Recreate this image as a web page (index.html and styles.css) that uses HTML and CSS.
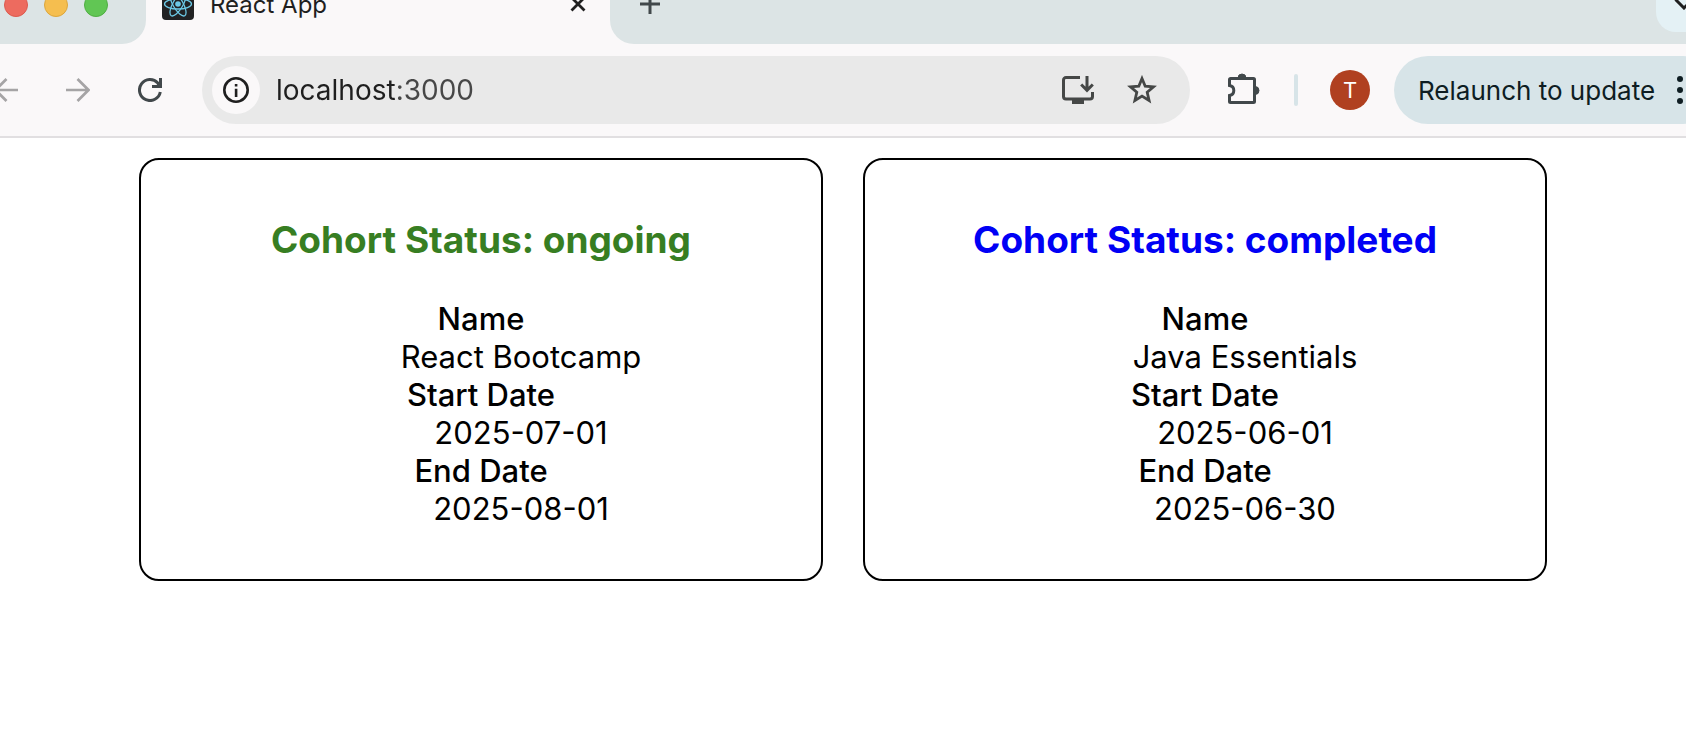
FILE: index.html
```
<!DOCTYPE html>
<html lang="en">
<head>
<meta charset="utf-8">
<title>React App</title>
<link rel="stylesheet" href="styles.css">
</head>
<body>
<header class="browser">
  <div class="tab-strip">
    <div class="window-controls">
      <button class="light light-close" aria-label="Close window"></button>
      <button class="light light-minimize" aria-label="Minimize window"></button>
      <button class="light light-zoom" aria-label="Zoom window"></button>
    </div>
    <div class="tab">
      <svg class="favicon" viewBox="0 0 32 32" aria-hidden="true">
        <rect width="32" height="32" rx="4" fill="#212224"/>
        <g fill="none" stroke="#6cc9e6" stroke-width="1.3">
          <ellipse cx="16" cy="16" rx="13.5" ry="5"/>
          <ellipse cx="16" cy="16" rx="13.5" ry="5" transform="rotate(60 16 16)"/>
          <ellipse cx="16" cy="16" rx="13.5" ry="5" transform="rotate(120 16 16)"/>
        </g>
        <circle cx="16" cy="16" r="2.8" fill="#6cc9e6"/>
      </svg>
      <span class="tab-title">React App</span>
      <button class="icon-button" aria-label="Close tab">
        <svg width="16" height="16" viewBox="0 0 16 16"><path d="M1.5 1.5l13 13M14.5 1.5l-13 13" fill="none" stroke="#1f1f1f" stroke-width="2.8"/></svg>
      </button>
    </div>
    <div class="strip-rest">
      <button class="icon-button" aria-label="New tab">
        <svg width="20" height="20" viewBox="0 0 20 20"><path d="M10 0v20M0 10h20" fill="none" stroke="#41484b" stroke-width="3"/></svg>
      </button>
      <button class="tab-search" aria-label="Search tabs">
        <svg width="20" height="12" viewBox="0 0 20 12"><path d="M1.5 1.5L10 10l8.500-8.500" fill="none" stroke="#1f1f1f" stroke-width="3"/></svg>
      </button>
    </div>
  </div>
  <div class="toolbar">
    <nav class="navigation" aria-label="History">
      <button class="icon-button" aria-label="Back">
        <svg width="24" height="24" viewBox="0 0 24 24"><path d="M24 12H2M12.500 1L1.500 12l11 11" fill="none" stroke="#a5a4a5" stroke-width="2.700"/></svg>
      </button>
      <button class="icon-button" aria-label="Forward">
        <svg width="24" height="24" viewBox="0 0 24 24"><path d="M0 12h22M11.500 1l11 11-11 11" fill="none" stroke="#a5a4a5" stroke-width="2.700"/></svg>
      </button>
      <button class="icon-button" aria-label="Reload">
        <svg width="24" height="24" viewBox="0 0 24 24"><path d="M22.300 14A10.500 10.500 0 1 1 19.800 5L22 7.500" fill="none" stroke="#41484b" stroke-width="3"/><path d="M21 0h3v10H14V7h4.500L21 4.500z" fill="#41484b"/></svg>
      </button>
    </nav>
    <div class="omnibox">
      <button class="site-info" aria-label="Site information">
        <svg width="26" height="26" viewBox="0 0 26 26"><circle cx="13" cy="13" r="11.700" fill="none" stroke="#1f1f1f" stroke-width="2.600"/><path d="M11.800 11.800h2.600V20h-2.600zM11.800 7h2.600v2.600h-2.600z" fill="#1f1f1f"/></svg>
      </button>
      <input class="address" type="text" value="localhost:3000" aria-label="Address">
      <button class="icon-button" aria-label="Install app">
        <svg width="32" height="28" viewBox="0 0 32 28" fill="none" stroke="#454746" stroke-width="3"><path d="M18 1.500H4A2.500 2.500 0 0 0 1.500 4v16.500A2.500 2.500 0 0 0 4 23h24a2.500 2.500 0 0 0 2.500-2.500V16M25 0v14M19.200 8.500l5.800 5.800 5.800-5.800"/><path d="M10 23h12v5H10z" fill="#454746" stroke="none"/></svg>
      </button>
      <button class="icon-button" aria-label="Bookmark this page">
        <svg width="30" height="30" viewBox="0 0 30 30"><path d="M15 3.500l3.200 7.700 8.300.7-6.300 5.400 1.900 8.200-7.100-4.400-7.100 4.400 1.900-8.200-6.300-5.400 8.300-.7z" fill="none" stroke="#454746" stroke-width="2.800"/></svg>
      </button>
    </div>
    <button class="icon-button" aria-label="Extensions">
      <svg width="32" height="34" viewBox="0 0 32 34"><path d="M3 5.500h22.500a1 1 0 0 1 1 1v22a1 1 0 0 1-1 1H2.500a1 1 0 0 1-1-1v-6c2.600-.4 4.300-2.500 4.300-5s-1.700-4.600-4.300-5v-6a1 1 0 0 1 1-1z" fill="none" stroke="#41484b" stroke-width="3"/><path d="M10 5a4 4 0 0 1 8 0zM27 13.500a4 4 0 0 1 0 8z" fill="#41484b" stroke="#41484b"/></svg>
    </button>
    <span class="divider"></span>
    <button class="avatar" aria-label="Profile">T</button>
    <button class="relaunch">
      <span>Relaunch to update</span>
      <svg width="6" height="28" viewBox="0 0 6 28" aria-hidden="true"><g fill="#0e1d22"><circle cx="3" cy="3" r="3"/><circle cx="3" cy="14" r="3"/><circle cx="3" cy="25" r="3"/></g></svg>
    </button>
  </div>
</header>
<main class="cohorts">
  <section class="card">
    <h3 class="status status-ongoing">Cohort Status: ongoing</h3>
    <dl class="details">
      <dt>Name</dt>
      <dd>React Bootcamp</dd>
      <dt>Start Date</dt>
      <dd>2025-07-01</dd>
      <dt>End Date</dt>
      <dd>2025-08-01</dd>
    </dl>
  </section>
  <section class="card">
    <h3 class="status status-completed">Cohort Status: completed</h3>
    <dl class="details">
      <dt>Name</dt>
      <dd>Java Essentials</dd>
      <dt>Start Date</dt>
      <dd>2025-06-01</dd>
      <dt>End Date</dt>
      <dd>2025-06-30</dd>
    </dl>
  </section>
</main>
</body>
</html>
```
FILE: styles.css
```
* {
  box-sizing: border-box;
}

body {
  margin: 0;
  background: #fff;
  color: #000;
  font-family: Inter, "Liberation Sans", sans-serif;
}

button {
  margin: 0;
  padding: 0;
  border: 0;
  background: none;
  color: inherit;
  font: inherit;
}

svg {
  display: block;
  flex: none;
}

.browser {
  overflow: hidden;
  background: #faf8f9;
  border-bottom: 2px solid #e1dfe1;
}

/* Tab strip */
.tab-strip {
  display: flex;
  height: 80px;
  margin-top: -36px;
}

.window-controls {
  display: flex;
  align-items: center;
  gap: 16px;
  padding: 2px 38px 0 4px;
  background: #dce4e5;
  border-bottom-right-radius: 24px;
}

.light {
  width: 24px;
  height: 24px;
  border: 1px solid;
  border-radius: 50%;
}

.light-close {
  background: #ed6b5f;
  border-color: #dc5a4e;
}

.light-minimize {
  background: #f5be4f;
  border-color: #dca63c;
}

.light-zoom {
  background: #61c654;
  border-color: #50ae43;
}

.tab {
  display: flex;
  align-items: center;
  gap: 16px;
  width: 464px;
  padding: 0 24px 0 16px;
}

.favicon {
  width: 32px;
  height: 32px;
}

.tab-title {
  flex: 1;
  color: #1f1f1f;
  font-size: 24px;
}

.strip-rest {
  flex: 1;
  display: flex;
  align-items: center;
  justify-content: space-between;
  padding-left: 30px;
  margin-right: -26px;
  background: #dce4e5;
  border-bottom-left-radius: 24px;
}

.tab-search {
  display: flex;
  align-items: center;
  justify-content: center;
  width: 56px;
  height: 56px;
  border-radius: 20px;
  background: #e4f1f5;
}

/* Toolbar */
.toolbar {
  display: flex;
  align-items: center;
  margin: 0 -31px 0 -6px;
  padding: 12px 0;
}

.navigation {
  display: flex;
  gap: 48px;
  margin-right: 40px;
}

.omnibox {
  flex: 1;
  display: flex;
  align-items: center;
  gap: 33px;
  height: 68px;
  margin-right: 38px;
  padding: 0 33px 0 10px;
  border-radius: 34px;
  background: #e9e9e9;
}

.site-info {
  display: flex;
  align-items: center;
  justify-content: center;
  width: 48px;
  height: 48px;
  margin-right: -17px;
  border-radius: 50%;
  background: #faf8f9;
}

.address {
  flex: 1;
  min-width: 0;
  padding: 0;
  border: 0;
  outline: 0;
  background: linear-gradient(to right, #1f1f1f 120px, #474747 120px);
  background-clip: text;
  color: transparent;
  font: 28px/40px Inter, "Liberation Sans", sans-serif;
}

.divider {
  width: 4px;
  height: 32px;
  margin: 0 32px 0 34px;
  border-radius: 2px;
  background: #d7e4e8;
}

.avatar {
  width: 40px;
  height: 40px;
  margin-right: 24px;
  border-radius: 50%;
  background: #b04020;
  color: #fff;
  font-size: 22px;
}

.relaunch {
  display: flex;
  align-items: center;
  justify-content: space-between;
  width: 323px;
  height: 68px;
  padding: 0 34px 0 24px;
  border-radius: 34px;
  background: #d7e4e8;
  color: #0e1d22;
  font-size: 26px;
}

/* Cohort cards */
.cohorts {
  display: flex;
  justify-content: center;
  gap: 40px;
  padding: 20px;
}

.card {
  flex: 0 1 684px;
  padding: 20px;
  border: 2px solid #000;
  border-radius: 20px;
  text-align: center;
}

.status {
  margin: 37px 0;
  font-size: 37px;
  font-weight: 700;
  line-height: 46px;
}

.status-ongoing {
  color: #377e22;
}

.status-completed {
  color: #0000f5;
}

.details {
  margin: 0 0 31px;
  font-size: 31px;
  line-height: 38px;
}

.details dt {
  font-weight: 500;
}

.details dd {
  margin: 0 0 0 80px;
}
```
